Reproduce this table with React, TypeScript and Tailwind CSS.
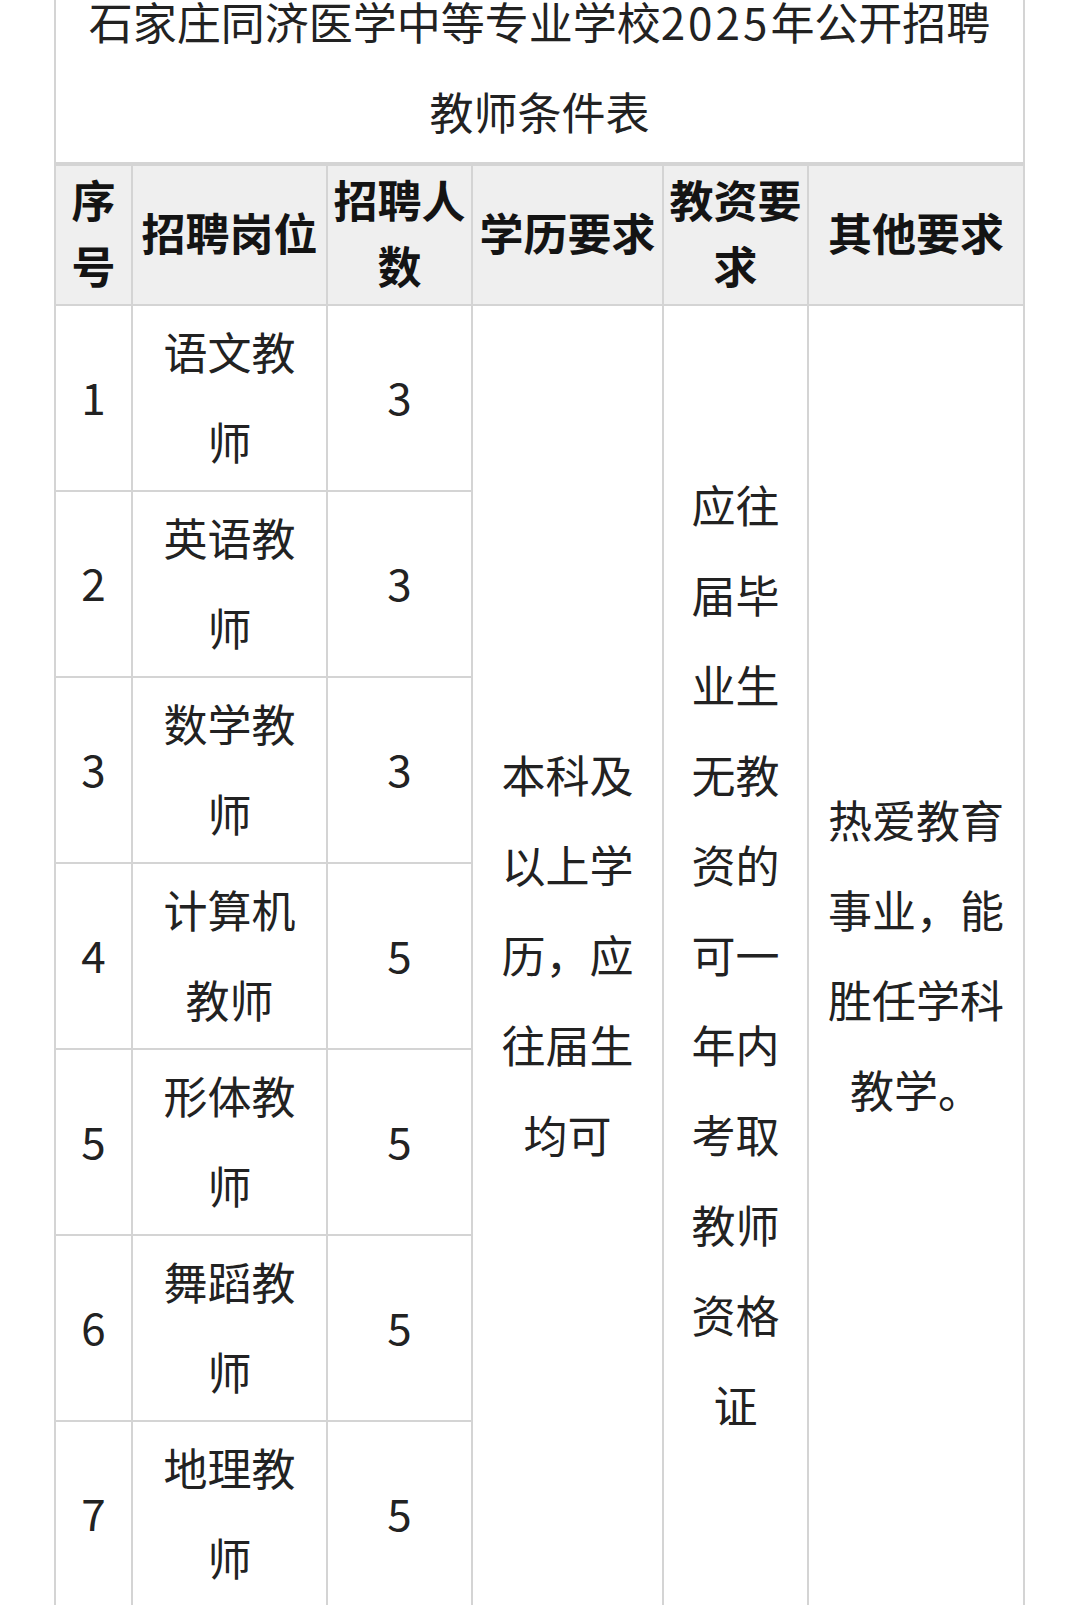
import React from "react";

const rows = [
  { no: "1", post: "语文教师", num: "3" },
  { no: "2", post: "英语教师", num: "3" },
  { no: "3", post: "数学教师", num: "3" },
  { no: "4", post: "计算机教师", num: "5" },
  { no: "5", post: "形体教师", num: "5" },
  { no: "6", post: "舞蹈教师", num: "5" },
  { no: "7", post: "地理教师", num: "5" },
];

const cell = "border-r-2 border-b-2 border-[#d4d4d4] text-center align-middle";
const head = `${cell} bg-[#efefef] font-bold text-[#141414] leading-[66px] px-[4px] pt-0 pb-[6px]`;
const body = `${cell} bg-white text-[#222] leading-[90px] px-[16px] pt-0 pb-[4px]`;

export default function App() {
  return (
    <div className="w-[1080px] h-[1605px] overflow-hidden bg-white font-['Noto_Sans_CJK_SC','Noto_Sans',sans-serif] text-[44px]">
      <table className="table-fixed border-separate border-spacing-0 border-l-2 border-t-2 border-[#d4d4d4] ml-[54px] -mt-[26px] w-[971px]">
        <colgroup>
          <col className="w-[77px]" />
          <col className="w-[195px]" />
          <col className="w-[145px]" />
          <col className="w-[191px]" />
          <col className="w-[145px]" />
          <col className="w-[216px]" />
        </colgroup>
        <thead>
          <tr>
            <th
              colSpan={6}
              className="border-r-2 border-b-[4px] border-[#d4d4d4] text-center font-normal text-[#222] leading-[90px] px-[14px] pt-0 pb-[6px]"
            >
              石家庄同济医学中等专业学校<span className="tracking-[3px]">2025</span>年公开招聘教师条件表
            </th>
          </tr>
          <tr>
            <th className={head}>序号</th>
            <th className={head}>招聘岗位</th>
            <th className={head}>招聘人数</th>
            <th className={head}>学历要求</th>
            <th className={head}>教资要求</th>
            <th className={head}>其他要求</th>
          </tr>
        </thead>
        <tbody>
          {rows.map((r, i) => (
            <tr key={r.no}>
              <td className={body}>{r.no}</td>
              <td className={body}>{r.post}</td>
              <td className={body}>{r.num}</td>
              {i === 0 && (
                <>
                  <td rowSpan={7} className={body}>
                    本科及以上学历，应往届生均可
                  </td>
                  <td rowSpan={7} className={body}>
                    应往届毕业生无教资的可一年内考取教师资格证
                  </td>
                  <td rowSpan={7} className={body}>
                    热爱教育事业，能胜任学科教学。
                  </td>
                </>
              )}
            </tr>
          ))}
        </tbody>
      </table>
    </div>
  );
}
